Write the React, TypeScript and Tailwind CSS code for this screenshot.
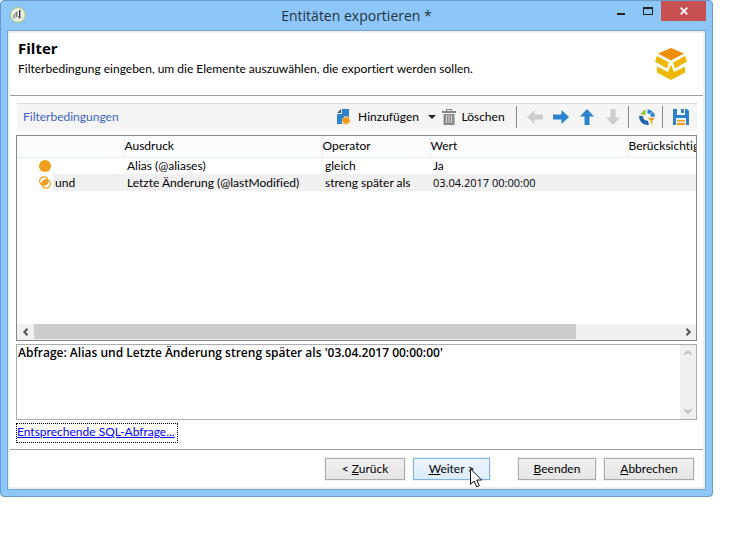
import type { ReactNode } from "react";

function AppIcon() {
  return (
    <svg width="16" height="16" viewBox="0 0 16 16" aria-hidden="true">
      <circle cx="8" cy="8" r="7.3" fill="#f3f3ee" stroke="#a9c95a" strokeWidth="1" />
      <path d="M3 7.500l2.500-1.500v5l-1.500 1-1-.5z" fill="#a4a6a6" />
      <path d="M5.500 5l2-1v5l-1.500 2z" fill="#7d8080" />
      <path d="M9.700 3v6.500l-1.500 .8" fill="none" stroke="#26292a" strokeWidth="1.300" />
      <path d="M8.500 11.500l3.500-1" stroke="#85898a" />
    </svg>
  );
}

function BoxLogo() {
  return (
    <svg width="32" height="32" viewBox="0 0 32 32" aria-hidden="true">
      <path d="M16 0L29 5.500 16 12.500 3 5.500z" fill="#ee9006" />
      <path d="M2 8L14 14.500 12 20.500 0 13.500z" fill="#edb800" />
      <path d="M30 8L18 14.500 20 20.500 32 13.500z" fill="#edb800" />
      <path d="M2 18.500L13 24 16 16.500 19 24 30 18.500V24.500L16 32 2 24.500z" fill="#edb800" />
    </svg>
  );
}

function AddIcon() {
  return (
    <svg width="14" height="16" viewBox="0 0 14 16" aria-hidden="true">
      <path d="M5 0h7v8l-4-1-3 4v4H0V5h5z" fill="#2b83d0" />
      <path d="M0 4l4-4v4z" fill="#2b5f91" />
      <circle cx="9" cy="11.500" r="3" fill="#f09a12" />
      <path d="M9 7.300v8.400M4.800 11.500h8.400M6 8.500l6 6M12 8.500l-6 6" stroke="#f09a12" strokeWidth="1.300" />
    </svg>
  );
}

function TrashIcon() {
  return (
    <svg width="14" height="16" viewBox="0 0 14 16" aria-hidden="true">
      <path d="M0 2h14v2H0zM4 0h6v2H9V1H5v1H4z" fill="#858585" />
      <path d="M1.500 5h11v11h-11z" fill="#8b8b8b" />
      <path d="M4.500 6v8M7 6v8M9.500 6v8" stroke="#d8d8d8" />
    </svg>
  );
}

const arrowTurns = {
  left: "rotate-180",
  right: "rotate-0",
  up: "-rotate-90",
  down: "rotate-90",
};

function Arrow({ dir, on }: { dir: keyof typeof arrowTurns; on?: boolean }) {
  return (
    <svg width="16" height="16" viewBox="0 0 16 16" className={arrowTurns[dir]} aria-hidden="true">
      <path d="M0 5.500h8.500V1L16 8l-7.500 7v-4.500H0z" fill={on ? "#2b83d0" : "#cdcdcd"} />
    </svg>
  );
}

function PreviewIcon() {
  return (
    <svg width="16" height="16" viewBox="0 0 16 16" fill="none" aria-hidden="true">
      <path d="M8.500 2.200a6 6 0 0 1 5.500 5.800" stroke="#2b83d0" strokeWidth="4" strokeDasharray="3.900 0.500" />
      <path d="M2.200 7A6 6 0 0 0 9.500 13.700" stroke="#1f64ae" strokeWidth="4" />
      <path d="M1.500 5.500L3.500 2.500l3-2.500v6z" fill="#8cc63f" />
      <path d="M8.500 8.500h7.500l-2.500 3.500v4l-2-1.500v-2.500z" fill="#f09a12" stroke="#f5f5f5" strokeWidth=".6" />
    </svg>
  );
}

function SaveIcon() {
  return (
    <svg width="16" height="16" viewBox="0 0 16 16" aria-hidden="true">
      <path d="M0 0h4v6h8V0h2l2 2v14h-3V9H3v7H0z" fill="#2b83d0" />
      <path d="M8 0h3v4H8z" fill="#2b83d0" />
      <path d="M4 11h8v1.500H4zM4 14h8v2H4z" fill="#f09a12" />
    </svg>
  );
}

function DotIcon() {
  return (
    <svg width="12" height="12" viewBox="0 0 12 12" className="block" aria-hidden="true">
      <circle cx="6" cy="6" r="6" fill="#f09c1c" />
    </svg>
  );
}

function AndIcon() {
  return (
    <svg width="12" height="13" viewBox="0 0 12 13" className="block" fill="none" stroke="#f09c1c" aria-hidden="true">
      <circle cx="4.800" cy="5" r="4.200" strokeWidth="1.200" />
      <circle cx="7.200" cy="8" r="4.200" strokeWidth="1.200" />
      <path d="M3.200 8.500C2.800 5.500 5 3.700 8.600 4.200 9.400 7.400 7 9.400 3.200 8.500z" fill="#f09c1c" />
    </svg>
  );
}

const chevronTurns = {
  left: "rotate-0",
  right: "rotate-180",
  up: "rotate-90",
  down: "-rotate-90",
};

function Chevron({ dir, color }: { dir: keyof typeof chevronTurns; color: string }) {
  return (
    <svg width="8" height="8" viewBox="0 0 8 8" className={chevronTurns[dir]} aria-hidden="true">
      <path d="M5.500 .8L2.300 4l3.200 3.200" fill="none" stroke={color} strokeWidth="2" />
    </svg>
  );
}

function Separator() {
  return <div className="h-[22px] w-px bg-[#8a8a8a]" />;
}

function DialogButton({ children, width, active }: { children: ReactNode; width: string; active?: boolean }) {
  const look = active
    ? "border-[#7eb4ea] bg-linear-to-b from-[#ecf4fc] to-[#dcecfc]"
    : "border-[#acacac] bg-linear-to-b from-[#f0f0f0] to-[#e5e5e5]";
  return (
    <button type="button" className={`relative h-[22px] border leading-none outline outline-[#f0f0f0] ${width} ${look}`}>
      {children}
    </button>
  );
}

const headCell = "border-l border-[#e3effb] p-0 text-left font-normal whitespace-nowrap";
const bodyCell = "py-0 pr-0 pl-[3px] whitespace-nowrap";

export default function App() {
  return (
    <div className="bg-white pr-[22px] font-[Lato,'Open_Sans',sans-serif] text-[12px] leading-4 text-black [font-variant-ligatures:none]">
      <div className="rounded-[4px] border border-[#6a9bc8] bg-[#8dc7f9] px-[6px] pb-[6px]">
        <header className="grid h-[29px] grid-cols-[1fr_auto_1fr]">
          <div className="pt-[6px] pl-[3px]">
            <AppIcon />
          </div>
          <h1 className="pt-[5px] font-['Open_Sans',sans-serif] text-[14px] leading-5 text-[#25313c]">Entitäten exportieren *</h1>
          <div className="flex items-start justify-end">
            <button type="button" aria-label="Minimieren" className="flex h-5 w-[27px] items-center justify-center">
              <span className="mt-[6px] h-[2px] w-2 bg-[#222]" />
            </button>
            <button type="button" aria-label="Maximieren" className="flex h-5 w-[27px] items-center justify-center">
              <span className="h-2 w-[10px] border border-t-2 border-[#222]" />
            </button>
            <button type="button" aria-label="Schließen" className="flex h-5 w-[45px] items-center justify-center bg-[#c75050]">
              <svg width="8" height="8" viewBox="0 0 8 8" aria-hidden="true">
                <path d="M.7 .7l6.600 6.600M7.300 .7L.7 7.300" stroke="#fff" strokeWidth="1.700" />
              </svg>
            </button>
          </div>
        </header>

        <main className="border border-[#71a3d2] bg-[#f0f0f0] p-[2px]">
          <div className="bg-white pb-[7px]">
            <div className="flex h-[63px] items-start justify-between border-b border-[#a0a0a0] pr-4 pl-2">
              <div>
                <h2 className="pt-[5px] font-['Open_Sans',sans-serif] text-[15px] leading-5 font-bold">Filter</h2>
                <p className="pt-[3px]">Filterbedingung eingeben, um die Elemente auszuwählen, die exportiert werden sollen.</p>
              </div>
              <div className="pt-[15px]">
                <BoxLogo />
              </div>
            </div>

            <div className="flex flex-col items-stretch gap-[3px] px-[6px] pt-[7px]">
              <div className="mb-px ml-px flex h-7 items-center justify-between border-t border-[#dcdcdc] bg-[#f5f5f5] pr-2 pb-px pl-[6px]">
                <h3 className="text-[#3a62c4]">Filterbedingungen</h3>
                <div className="flex items-center gap-[10px]">
                  <div className="flex items-center gap-[6px]">
                    <button type="button" className="flex items-center gap-1">
                      <AddIcon />
                      <span className="w-[67px] text-center">Hinzufügen</span>
                    </button>
                    <button type="button" aria-label="Weitere Optionen" className="flex h-4 items-center">
                      <svg width="8" height="4" viewBox="0 0 8 4" aria-hidden="true">
                        <path d="M0 0h8L4 4z" fill="#222" />
                      </svg>
                    </button>
                    <button type="button" className="flex items-center gap-1">
                      <TrashIcon />
                      <span className="w-[46px] text-center">Löschen</span>
                    </button>
                  </div>
                  <Separator />
                  <button type="button" aria-label="Nach links"><Arrow dir="left" /></button>
                  <button type="button" aria-label="Nach rechts"><Arrow dir="right" on /></button>
                  <button type="button" aria-label="Nach oben"><Arrow dir="up" on /></button>
                  <div className="flex items-center gap-[7px]">
                    <button type="button" aria-label="Nach unten"><Arrow dir="down" /></button>
                    <Separator />
                  </div>
                  <div className="flex items-center gap-[7px]">
                    <button type="button" aria-label="Vorschau"><PreviewIcon /></button>
                    <Separator />
                  </div>
                  <button type="button" aria-label="Speichern"><SaveIcon /></button>
                </div>
              </div>

              <div className="border border-[#828790]">
                <div className="h-[188px] overflow-hidden">
                  <table className="w-[850px] table-fixed border-collapse">
                    <colgroup>
                      <col className="w-[36px]" />
                      <col className="w-[71px]" />
                      <col className="w-[198px]" />
                      <col className="w-[108px]" />
                      <col className="w-[198px]" />
                      <col />
                    </colgroup>
                    <thead>
                      <tr className="h-[21px] border-b border-[#e3effb] bg-[#fcfcfc]">
                        <th colSpan={2} className="p-0" aria-label="Verknüpfung" />
                        <th className={headCell}>Ausdruck</th>
                        <th className={headCell}>Operator</th>
                        <th className={headCell}>Wert</th>
                        <th className={headCell}>Berücksichtig</th>
                      </tr>
                    </thead>
                    <tbody>
                      <tr className="h-[17px]">
                        <td className="py-0 pr-0 pl-[22px]"><DotIcon /></td>
                        <td />
                        <td className={bodyCell}>Alias (@aliases)</td>
                        <td className={bodyCell}>gleich</td>
                        <td className={bodyCell}>Ja</td>
                        <td />
                      </tr>
                      <tr className="h-[17px]">
                        <td className="py-0 pr-0 pl-[22px]"><AndIcon /></td>
                        <td className="bg-[#f0f0f0] py-0 pr-0 pl-[2px]">und</td>
                        <td className={`bg-[#f0f0f0] ${bodyCell}`}>Letzte Änderung (@lastModified)</td>
                        <td className={`bg-[#f0f0f0] ${bodyCell}`}>streng später als</td>
                        <td className={`bg-[#f0f0f0] font-['Open_Sans',sans-serif] text-[11px] ${bodyCell}`}>03.04.2017 00:00:00</td>
                        <td className="bg-[#f0f0f0]" />
                      </tr>
                    </tbody>
                  </table>
                </div>
                <div className="flex h-4 bg-[#f0f0f0]">
                  <button type="button" aria-label="Nach links blättern" className="flex w-[17px] items-center justify-center">
                    <Chevron dir="left" color="#555" />
                  </button>
                  <div className="flex-1">
                    <div className="h-[15px] w-[84%] bg-[#cdcdcd]" />
                  </div>
                  <button type="button" aria-label="Nach rechts blättern" className="flex w-[17px] items-center justify-center">
                    <Chevron dir="right" color="#555" />
                  </button>
                </div>
              </div>

              <div className="flex h-[76px] border border-[#abadb3]">
                <textarea
                  readOnly
                  aria-label="Abfrage"
                  className="flex-1 resize-none overflow-hidden px-px font-['Open_Sans',sans-serif] font-semibold outline-none"
                  defaultValue="Abfrage: Alias und Letzte Änderung streng später als '03.04.2017 00:00:00'"
                />
                <div className="flex w-4 flex-col items-center justify-between bg-[#f0f0f0] py-[4px]">
                  <Chevron dir="up" color="#bdbdbd" />
                  <Chevron dir="down" color="#bdbdbd" />
                </div>
              </div>

              <a href="#sql" className="h-5 w-[162px] self-start border border-dotted border-black whitespace-nowrap text-[#0000ff] underline">
                Entsprechende SQL-Abfrage...
              </a>
            </div>

            <footer className="mt-[6px] flex justify-end gap-2 border-t border-[#a0a0a0] pt-2 pr-[9px]">
              <DialogButton width="w-[80px]">&lt; <u>Z</u>urück</DialogButton>
              <DialogButton width="w-[77px]" active>
                <u>W</u>eiter &gt;
                <svg width="13" height="20" viewBox="0 0 13 20" className="absolute top-[9px] left-[56px]" aria-hidden="true">
                  <path d="M.5 .8v15.500l3.600-3.300 2.600 5.800 2.600-1.200-2.600-5.600h4.900z" fill="#fff" stroke="#111" />
                </svg>
              </DialogButton>
              <div className="w-3" />
              <DialogButton width="w-[78px]"><u>B</u>eenden</DialogButton>
              <DialogButton width="w-[90px]"><u>A</u>bbrechen</DialogButton>
            </footer>
          </div>
        </main>
      </div>
    </div>
  );
}
